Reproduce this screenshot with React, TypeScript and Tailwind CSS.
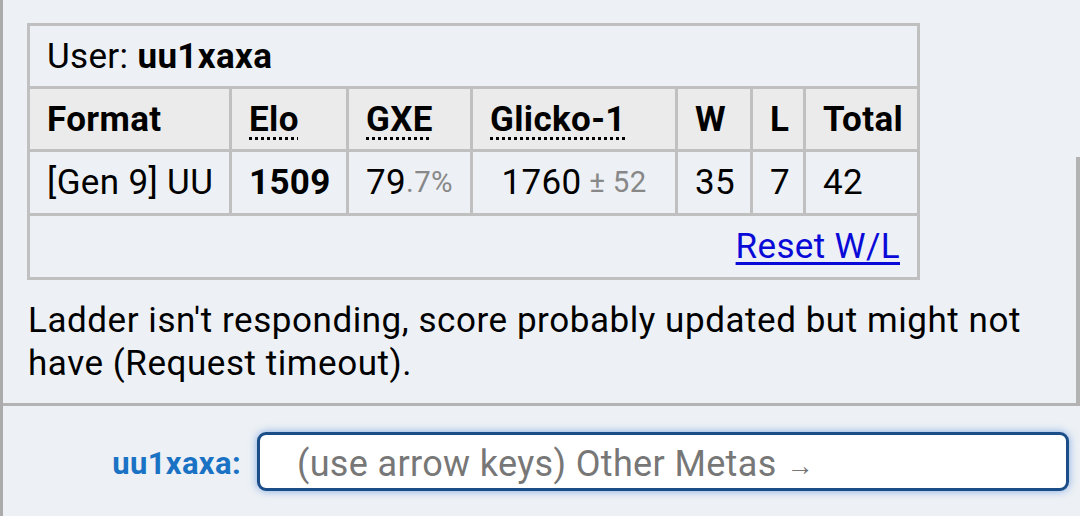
import React from "react";

const cell = "border-l-[3px] border-t-[3px] border-[#c0c0c0] flex items-center px-[17px] whitespace-nowrap";
const head = cell + " bg-[#ebebeb] font-bold";
const abbr = "underline decoration-dotted decoration-[3px] underline-offset-[6px]";

export default function App() {
  return (
    <div className="relative w-[1080px] h-[516px] overflow-hidden bg-[#edf1f5] border-l-[3px] border-[#ababab] text-black font-['Roboto',sans-serif] text-[35px] leading-[43px] tracking-[0.35px]">
      {/* chat log */}
      <div className="h-[406px] border-b-[3px] border-[#b3b3b3] pl-[24px] pt-[23px]">
        <div className="grid w-fit grid-cols-[202px_117px_124px_205px_75px_53px_114px] grid-rows-[63px_63px_64px_64px] border-r-[3px] border-b-[3px] border-[#c0c0c0]">
          <div className={cell + " col-span-7"}>
            User:&nbsp;<strong>uu1xaxa</strong>
          </div>
          <div className={head}>Format</div>
          <div className={head}><abbr className={abbr} title="Elo rating">Elo</abbr></div>
          <div className={head}><abbr className={abbr} title="user's percentage chance of winning a random battle">GXE</abbr></div>
          <div className={head}><abbr className={abbr} title="Glicko-1 rating system">Glicko-1</abbr></div>
          <div className={head}>W</div>
          <div className={head}>L</div>
          <div className={head}>Total</div>

          <div className={cell}>[Gen 9] UU</div>
          <div className={cell}><strong>1509</strong></div>
          <div className={cell}>79<small className="text-[0.84em] text-[#888]">.7%</small></div>
          <div className={cell + " justify-center"}>1760<small className="text-[0.84em] text-[#888]">&nbsp;±&nbsp;52</small></div>
          <div className={cell}>35</div>
          <div className={cell}>7</div>
          <div className={cell}>42</div>

          <div className={cell + " col-span-7 justify-end"}>
            <a href="#" className="text-[#0a0ad8] underline underline-offset-[4px]">Reset W/L</a>
          </div>
        </div>
        <p className="mt-[19px] ml-[1px] w-[1035px] tracking-[0.55px]">
          Ladder isn't responding, score probably updated but might not have (Request timeout).
        </p>
      </div>

      {/* scrollbar thumb */}
      <div className="absolute right-0 top-[157px] h-[246px] w-[4px] bg-[#b3b3b3]" />

      {/* chat input */}
      <div className="flex items-center pt-[26px]">
        <div className="w-[238px] text-right font-bold text-[31px] text-[#1a72c4] pt-[4px]">uu1xaxa:</div>
        <div className="ml-[16px] w-[812px] h-[59px] rounded-[9px] border-[3px] border-[#1b4e88] bg-white shadow-[0_0_9px_rgba(40,110,210,0.55)] flex items-center pl-[37px] text-[#777] text-[36px] pt-[6px]">
          (use arrow keys) Other Metas <span className="text-[0.75em] ml-[10px] pt-[4px]">→</span>
        </div>
      </div>
    </div>
  );
}
